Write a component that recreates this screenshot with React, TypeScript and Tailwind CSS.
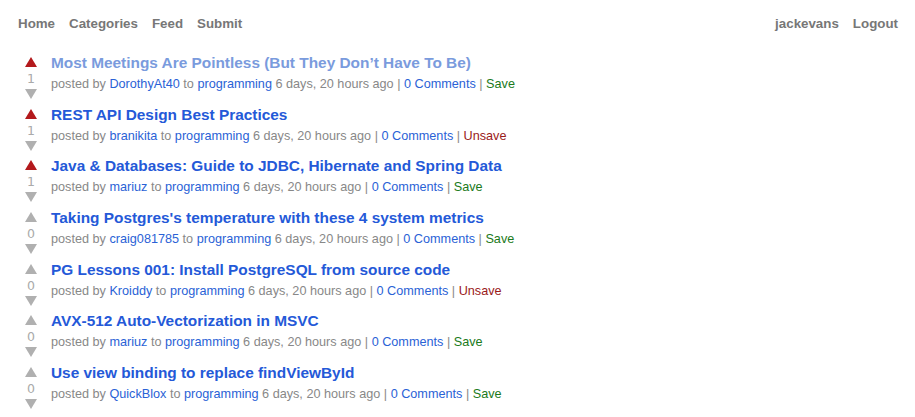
import React from "react";

type Post = {
  title: string;
  author: string;
  votes: number;
  voted: boolean;
  saved: boolean;
  visited?: boolean;
};

const posts: Post[] = [
  { title: "Most Meetings Are Pointless (But They Don\u2019t Have To Be)", author: "DorothyAt40", votes: 1, voted: true, saved: false, visited: true },
  { title: "REST API Design Best Practices", author: "branikita", votes: 1, voted: true, saved: true },
  { title: "Java & Databases: Guide to JDBC, Hibernate and Spring Data", author: "mariuz", votes: 1, voted: true, saved: false },
  { title: "Taking Postgres's temperature with these 4 system metrics", author: "craig081785", votes: 0, voted: false, saved: false },
  { title: "PG Lessons 001: Install PostgreSQL from source code", author: "Kroiddy", votes: 0, voted: false, saved: true },
  { title: "AVX-512 Auto-Vectorization in MSVC", author: "mariuz", votes: 0, voted: false, saved: false },
  { title: "Use view binding to replace findViewById", author: "QuickBlox", votes: 0, voted: false, saved: false },
];

function Arrow({ up, color }: { up: boolean; color: string }) {
  return (
    <svg width="12" height="10" viewBox="0 0 12 10" className="block">
      <polygon points={up ? "6,0 12,10 0,10" : "0,0 12,0 6,10"} fill={color} />
    </svg>
  );
}

function PostRow({ post }: { post: Post }) {
  return (
    <div className="flex h-[51.67px]">
      <div className="flex w-[26px] flex-col items-center pt-[5px]">
        <Arrow up color={post.voted ? "#b3191c" : "#b0b0b0"} />
        <span className="mt-[4px] font-['DejaVu_Sans',sans-serif] text-[12.5px] leading-[16px] text-[#aaa]">
          {post.votes}
        </span>
        <div className="mt-[2px]">
          <Arrow up={false} color="#b0b0b0" />
        </div>
      </div>
      <div className="ml-[7px] pt-[1px]">
        <a
          href="#"
          className={`block text-[15.4px] font-bold leading-[20px] ${post.visited ? "text-[#7a9bdd]" : "text-[#2459d8]"}`}
        >
          {post.title}
        </a>
        <div className="mt-[1px] text-[12.67px] leading-[20px] text-[#888]">
          posted by <a href="#" className="text-[#2a62d6]">{post.author}</a> to{" "}
          <a href="#" className="text-[#2a62d6]">programming</a> 6 days, 20 hours ago |{" "}
          <a href="#" className="text-[#2a62d6]">0 Comments</a> |{" "}
          {post.saved ? (
            <a href="#" className="text-[#9a1a1a]">Unsave</a>
          ) : (
            <a href="#" className="text-[#1b7a1b]">Save</a>
          )}
        </div>
      </div>
    </div>
  );
}

export default function App() {
  return (
    <div className="min-h-screen bg-white font-['Liberation_Sans',Arial,sans-serif]">
      <nav className="flex items-center justify-between pl-[18px] pr-[17px] pt-[15px] text-[13.33px] font-bold leading-[17px] text-[#777]">
        <div className="flex gap-[14px]">
          <a href="#">Home</a>
          <a href="#">Categories</a>
          <a href="#">Feed</a>
          <a href="#">Submit</a>
        </div>
        <div className="flex gap-[14px]">
          <a href="#">jackevans</a>
          <a href="#">Logout</a>
        </div>
      </nav>
      <div className="mt-[20px] px-[18px]">
        {posts.map((p, i) => (
          <PostRow key={i} post={p} />
        ))}
      </div>
    </div>
  );
}
